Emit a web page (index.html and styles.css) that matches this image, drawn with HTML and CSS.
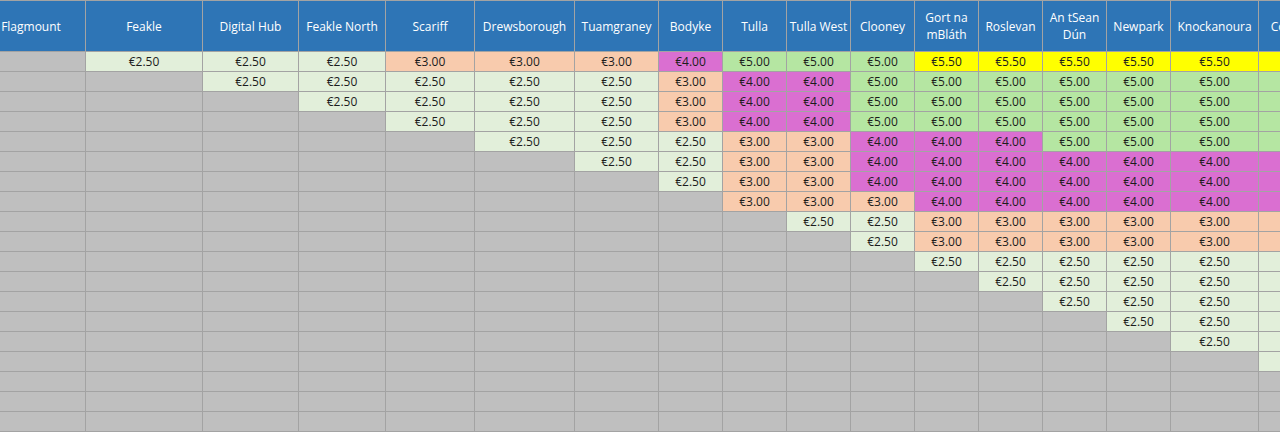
FILE: index.html
```html
<!DOCTYPE html>
<html lang="en">
<head>
<meta charset="utf-8">
<title>Fare matrix</title>
<link rel="stylesheet" href="styles.css">
</head>
<body>
<div class="sheet">
  <div class="h">Flagmount</div><div class="h">Feakle</div><div class="h">Digital Hub</div><div class="h">Feakle North</div><div class="h">Scariff</div><div class="h">Drewsborough</div><div class="h">Tuamgraney</div><div class="h">Bodyke</div><div class="h">Tulla</div><div class="h">Tulla West</div><div class="h">Clooney</div><div class="h">Gort na mBláth</div><div class="h">Roslevan</div><div class="h">An tSean Dún</div><div class="h">Newpark</div><div class="h">Knockanoura</div><div class="h">Cooraclare</div>

  <div class="c g"></div><div class="c l">€2.50</div><div class="c l">€2.50</div><div class="c l">€2.50</div><div class="c p">€3.00</div><div class="c p">€3.00</div><div class="c p">€3.00</div><div class="c m">€4.00</div><div class="c n">€5.00</div><div class="c n">€5.00</div><div class="c n">€5.00</div><div class="c y">€5.50</div><div class="c y">€5.50</div><div class="c y">€5.50</div><div class="c y">€5.50</div><div class="c y">€5.50</div><div class="c y">€5.50</div>

  <div class="c g"></div><div class="c g"></div><div class="c l">€2.50</div><div class="c l">€2.50</div><div class="c l">€2.50</div><div class="c l">€2.50</div><div class="c l">€2.50</div><div class="c p">€3.00</div><div class="c m">€4.00</div><div class="c m">€4.00</div><div class="c n">€5.00</div><div class="c n">€5.00</div><div class="c n">€5.00</div><div class="c n">€5.00</div><div class="c n">€5.00</div><div class="c n">€5.00</div><div class="c n">€5.00</div>

  <div class="c g"></div><div class="c g"></div><div class="c g"></div><div class="c l">€2.50</div><div class="c l">€2.50</div><div class="c l">€2.50</div><div class="c l">€2.50</div><div class="c p">€3.00</div><div class="c m">€4.00</div><div class="c m">€4.00</div><div class="c n">€5.00</div><div class="c n">€5.00</div><div class="c n">€5.00</div><div class="c n">€5.00</div><div class="c n">€5.00</div><div class="c n">€5.00</div><div class="c n">€5.00</div>

  <div class="c g"></div><div class="c g"></div><div class="c g"></div><div class="c g"></div><div class="c l">€2.50</div><div class="c l">€2.50</div><div class="c l">€2.50</div><div class="c p">€3.00</div><div class="c m">€4.00</div><div class="c m">€4.00</div><div class="c n">€5.00</div><div class="c n">€5.00</div><div class="c n">€5.00</div><div class="c n">€5.00</div><div class="c n">€5.00</div><div class="c n">€5.00</div><div class="c n">€5.00</div>

  <div class="c g"></div><div class="c g"></div><div class="c g"></div><div class="c g"></div><div class="c g"></div><div class="c l">€2.50</div><div class="c l">€2.50</div><div class="c l">€2.50</div><div class="c p">€3.00</div><div class="c p">€3.00</div><div class="c m">€4.00</div><div class="c m">€4.00</div><div class="c m">€4.00</div><div class="c n">€5.00</div><div class="c n">€5.00</div><div class="c n">€5.00</div><div class="c n">€5.00</div>

  <div class="c g"></div><div class="c g"></div><div class="c g"></div><div class="c g"></div><div class="c g"></div><div class="c g"></div><div class="c l">€2.50</div><div class="c l">€2.50</div><div class="c p">€3.00</div><div class="c p">€3.00</div><div class="c m">€4.00</div><div class="c m">€4.00</div><div class="c m">€4.00</div><div class="c m">€4.00</div><div class="c m">€4.00</div><div class="c m">€4.00</div><div class="c m">€4.00</div>

  <div class="c g"></div><div class="c g"></div><div class="c g"></div><div class="c g"></div><div class="c g"></div><div class="c g"></div><div class="c g"></div><div class="c l">€2.50</div><div class="c p">€3.00</div><div class="c p">€3.00</div><div class="c m">€4.00</div><div class="c m">€4.00</div><div class="c m">€4.00</div><div class="c m">€4.00</div><div class="c m">€4.00</div><div class="c m">€4.00</div><div class="c m">€4.00</div>

  <div class="c g"></div><div class="c g"></div><div class="c g"></div><div class="c g"></div><div class="c g"></div><div class="c g"></div><div class="c g"></div><div class="c g"></div><div class="c p">€3.00</div><div class="c p">€3.00</div><div class="c p">€3.00</div><div class="c m">€4.00</div><div class="c m">€4.00</div><div class="c m">€4.00</div><div class="c m">€4.00</div><div class="c m">€4.00</div><div class="c m">€4.00</div>

  <div class="c g"></div><div class="c g"></div><div class="c g"></div><div class="c g"></div><div class="c g"></div><div class="c g"></div><div class="c g"></div><div class="c g"></div><div class="c g"></div><div class="c l">€2.50</div><div class="c l">€2.50</div><div class="c p">€3.00</div><div class="c p">€3.00</div><div class="c p">€3.00</div><div class="c p">€3.00</div><div class="c p">€3.00</div><div class="c p">€3.00</div>

  <div class="c g"></div><div class="c g"></div><div class="c g"></div><div class="c g"></div><div class="c g"></div><div class="c g"></div><div class="c g"></div><div class="c g"></div><div class="c g"></div><div class="c g"></div><div class="c l">€2.50</div><div class="c p">€3.00</div><div class="c p">€3.00</div><div class="c p">€3.00</div><div class="c p">€3.00</div><div class="c p">€3.00</div><div class="c p">€3.00</div>

  <div class="c g"></div><div class="c g"></div><div class="c g"></div><div class="c g"></div><div class="c g"></div><div class="c g"></div><div class="c g"></div><div class="c g"></div><div class="c g"></div><div class="c g"></div><div class="c g"></div><div class="c l">€2.50</div><div class="c l">€2.50</div><div class="c l">€2.50</div><div class="c l">€2.50</div><div class="c l">€2.50</div><div class="c l">€2.50</div>

  <div class="c g"></div><div class="c g"></div><div class="c g"></div><div class="c g"></div><div class="c g"></div><div class="c g"></div><div class="c g"></div><div class="c g"></div><div class="c g"></div><div class="c g"></div><div class="c g"></div><div class="c g"></div><div class="c l">€2.50</div><div class="c l">€2.50</div><div class="c l">€2.50</div><div class="c l">€2.50</div><div class="c l">€2.50</div>

  <div class="c g"></div><div class="c g"></div><div class="c g"></div><div class="c g"></div><div class="c g"></div><div class="c g"></div><div class="c g"></div><div class="c g"></div><div class="c g"></div><div class="c g"></div><div class="c g"></div><div class="c g"></div><div class="c g"></div><div class="c l">€2.50</div><div class="c l">€2.50</div><div class="c l">€2.50</div><div class="c l">€2.50</div>

  <div class="c g"></div><div class="c g"></div><div class="c g"></div><div class="c g"></div><div class="c g"></div><div class="c g"></div><div class="c g"></div><div class="c g"></div><div class="c g"></div><div class="c g"></div><div class="c g"></div><div class="c g"></div><div class="c g"></div><div class="c g"></div><div class="c l">€2.50</div><div class="c l">€2.50</div><div class="c l">€2.50</div>

  <div class="c g"></div><div class="c g"></div><div class="c g"></div><div class="c g"></div><div class="c g"></div><div class="c g"></div><div class="c g"></div><div class="c g"></div><div class="c g"></div><div class="c g"></div><div class="c g"></div><div class="c g"></div><div class="c g"></div><div class="c g"></div><div class="c g"></div><div class="c l">€2.50</div><div class="c l">€2.50</div>

  <div class="c g"></div><div class="c g"></div><div class="c g"></div><div class="c g"></div><div class="c g"></div><div class="c g"></div><div class="c g"></div><div class="c g"></div><div class="c g"></div><div class="c g"></div><div class="c g"></div><div class="c g"></div><div class="c g"></div><div class="c g"></div><div class="c g"></div><div class="c g"></div><div class="c l">€2.50</div>

  <div class="c g"></div><div class="c g"></div><div class="c g"></div><div class="c g"></div><div class="c g"></div><div class="c g"></div><div class="c g"></div><div class="c g"></div><div class="c g"></div><div class="c g"></div><div class="c g"></div><div class="c g"></div><div class="c g"></div><div class="c g"></div><div class="c g"></div><div class="c g"></div><div class="c g"></div>

  <div class="c g"></div><div class="c g"></div><div class="c g"></div><div class="c g"></div><div class="c g"></div><div class="c g"></div><div class="c g"></div><div class="c g"></div><div class="c g"></div><div class="c g"></div><div class="c g"></div><div class="c g"></div><div class="c g"></div><div class="c g"></div><div class="c g"></div><div class="c g"></div><div class="c g"></div>

  <div class="c g"></div><div class="c g"></div><div class="c g"></div><div class="c g"></div><div class="c g"></div><div class="c g"></div><div class="c g"></div><div class="c g"></div><div class="c g"></div><div class="c g"></div><div class="c g"></div><div class="c g"></div><div class="c g"></div><div class="c g"></div><div class="c g"></div><div class="c g"></div><div class="c g"></div>
</div>
</body>
</html>
```

FILE: styles.css
```css
html, body {
  margin: 0;
  padding: 0;
  background: #bfbfbf;
  overflow: hidden;
}

.sheet {
  display: grid;
  grid-template-columns: 108px 116px 95px 86px 88px 99px 83px 63px 63px 63px 63px 63px 63px 63px 63px 87px 84px;
  grid-template-rows: 50px repeat(19, 19px);
  gap: 1px;
  padding: 1px 0;
  margin-left: -23px;
  width: max-content;
  background: #a3a3a3;
  font-family: "Open Sans", "Noto Sans", sans-serif;
  font-size: 12px;
}

.h {
  background: #2e75b6;
  color: #ffffff;
  display: flex;
  align-items: center;
  justify-content: center;
  text-align: center;
  line-height: 17px;
  padding: 0;
}

.c {
  display: flex;
  align-items: center;
  justify-content: center;
  color: #1c1c1c;
  line-height: 19px;
}

.g { background: #bfbfbf; }
.l { background: #e2efda; }
.p { background: #f8cbad; }
.m { background: #da6fd1; }
.n { background: #b5e6a2; }
.y { background: #ffff00; }
```
